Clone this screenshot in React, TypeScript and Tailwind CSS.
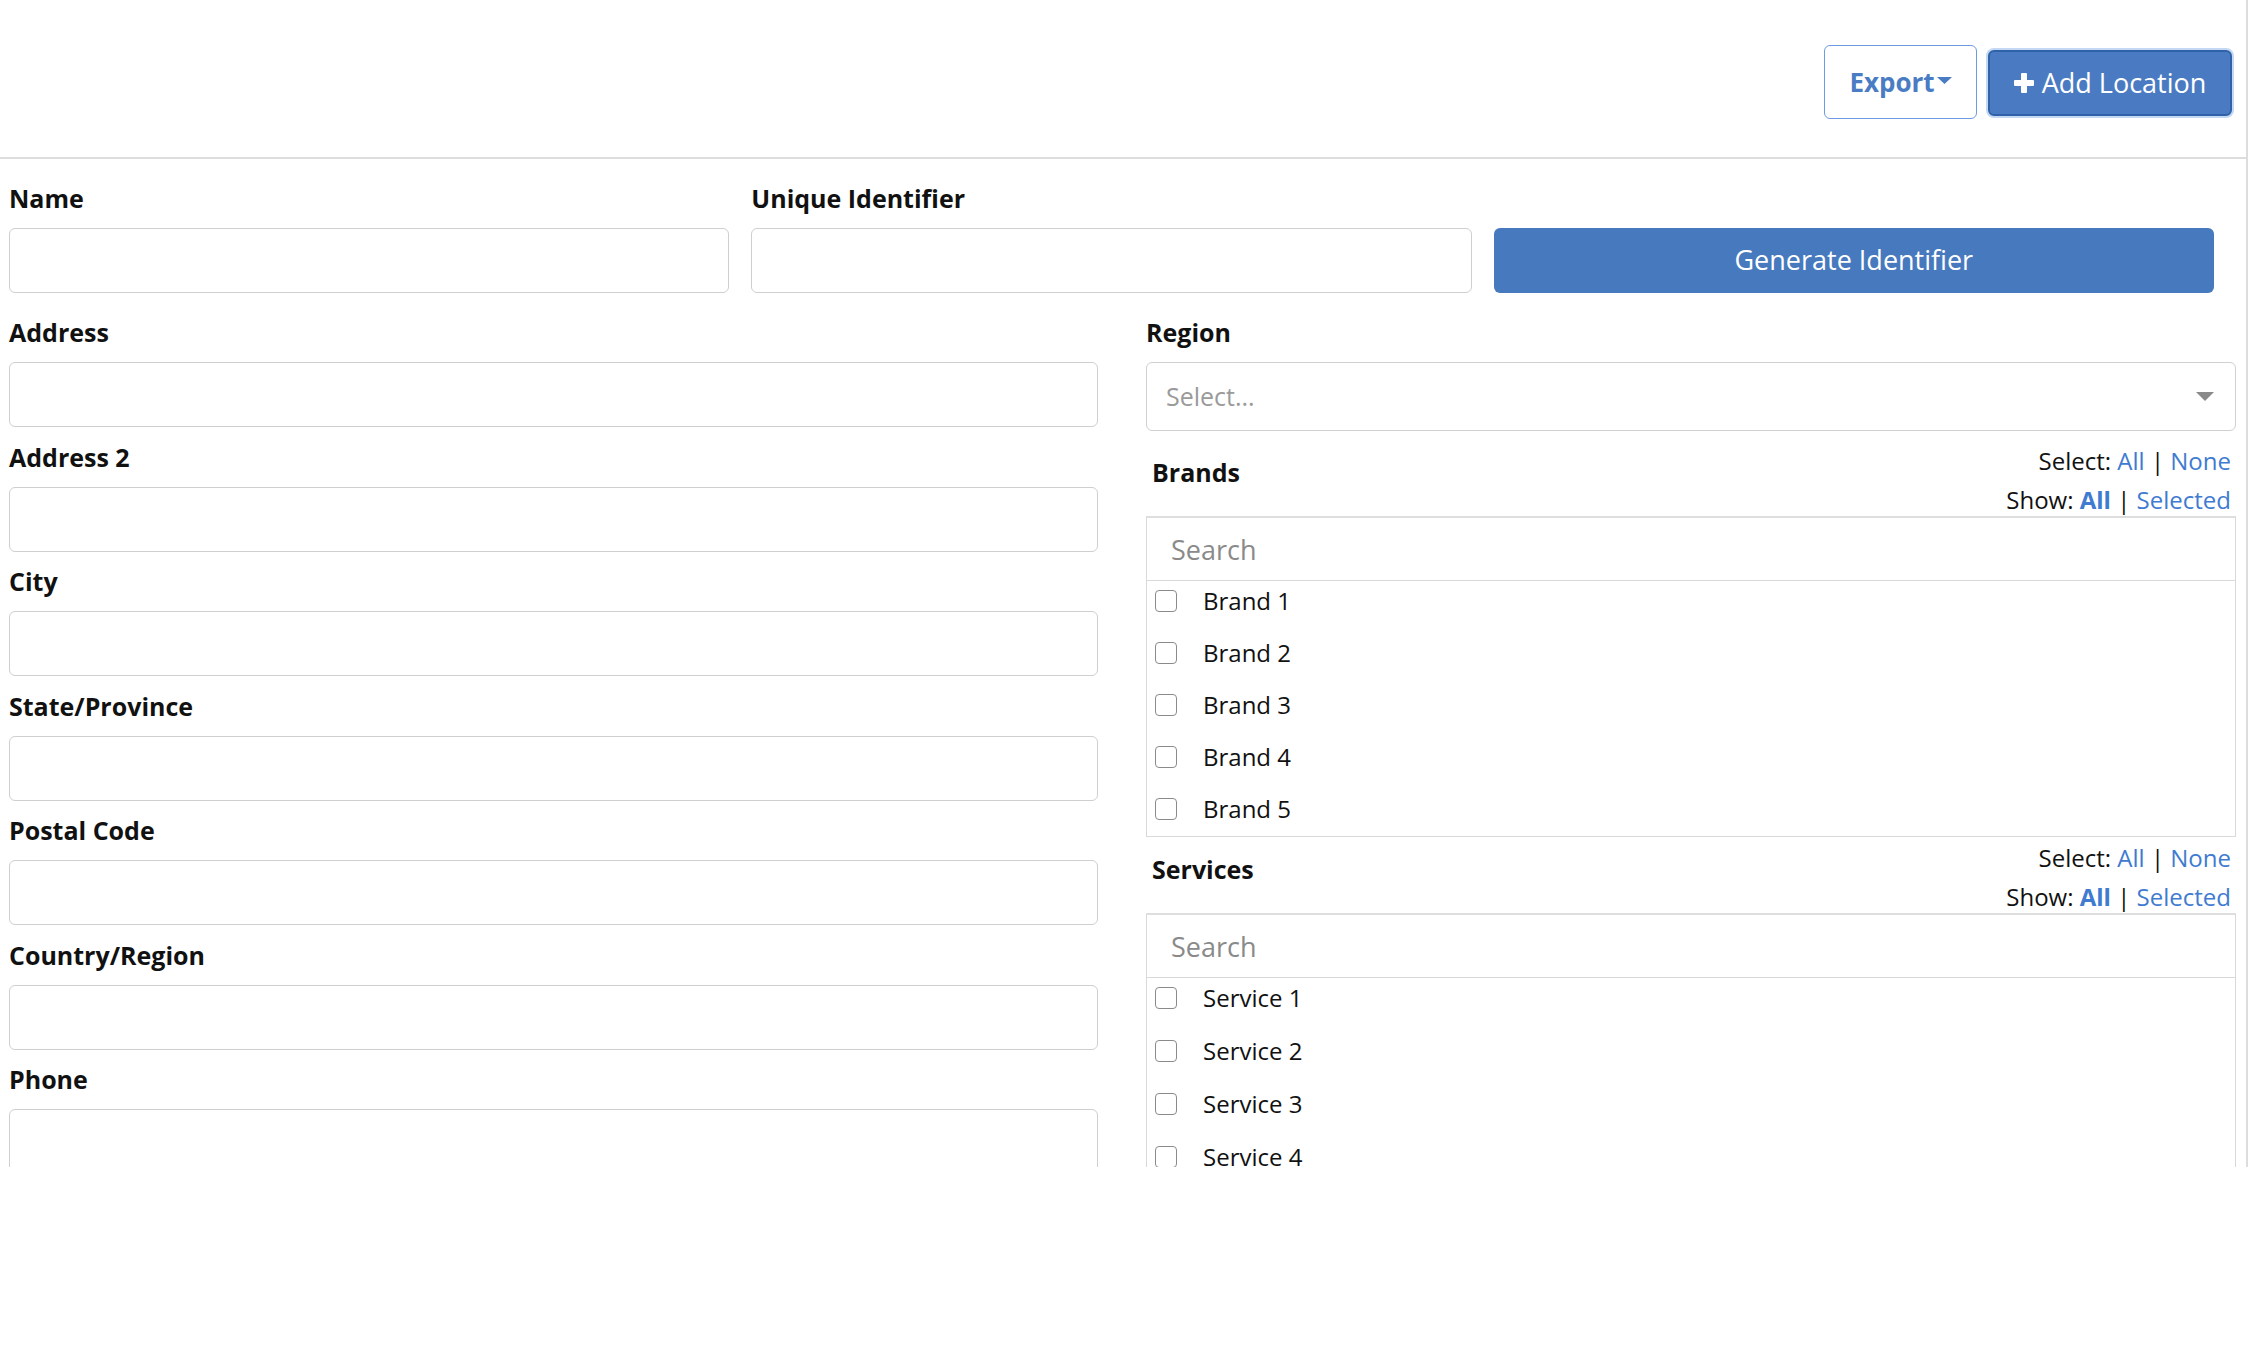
import React from 'react';

const leftFields = ['Address', 'Address 2', 'City', 'State/Province', 'Postal Code', 'Country/Region', 'Phone'];
const brands = ['Brand 1', 'Brand 2', 'Brand 3', 'Brand 4', 'Brand 5'];
const services = ['Service 1', 'Service 2', 'Service 3', 'Service 4'];

const Label: React.FC<{ children: React.ReactNode }> = ({ children }) => (
  <div className="text-[25px] font-bold leading-[34px] text-[#111] mb-[13px]">{children}</div>
);

const TextInput: React.FC = () => (
  <input
    type="text"
    className="block w-full h-[65px] rounded-[6px] border border-[#cfcfcf] bg-white px-4 text-[25px] outline-none"
  />
);

const CheckList: React.FC<{ title: string; items: string[]; gap: string }> = ({ title, items, gap }) => (
  <div>
    <div className="flex justify-between h-[73px]">
      <div className="pl-[6px] pt-[11px] text-[25px] font-bold leading-[36px] text-[#111]">{title}</div>
      <div className="pr-[5px] text-right text-[24px] text-[#111]">
        <div className="leading-[36px]">
          Select: <span className="text-[#3f7bd0]">All</span> | <span className="text-[#3f7bd0]">None</span>
        </div>
        <div className="leading-[36px] mt-[3px]">
          Show: <span className="font-bold text-[#3f7bd0]">All</span> | <span className="text-[#3f7bd0]">Selected</span>
        </div>
      </div>
    </div>
    <div className="border border-[#d9d9d9] border-t-2 border-t-[#dedede] bg-white">
      <input
        type="text"
        placeholder="Search"
        className="block w-full h-[63px] border-b border-[#d9d9d9] pl-[24px] text-[27px] text-[#222] placeholder:text-[#8a8a8a] outline-none"
      />
      <div className={`flex flex-col ${gap} pt-[2px] pb-[9px]`}>
        {items.map((item) => (
          <label key={item} className="flex items-center h-[36px] pl-[8px]">
            <span className="w-[22px] h-[22px] rounded-[4px] border-[1.5px] border-[#8a8a8a] bg-white" />
            <span className="ml-[26px] text-[24px] text-[#111]">{item}</span>
          </label>
        ))}
      </div>
    </div>
  </div>
);

export default function App() {
  return (
    <div className="w-[2248px] h-[1167px] overflow-hidden border-r-2 border-[#dddddd] bg-white font-['Open_Sans',sans-serif]">
      <div className="h-[159px] border-b-2 border-[#dddddd] flex justify-end items-start pt-[45px] pr-[14px] gap-[11px]">
        <button className="w-[153px] h-[74px] rounded-[6px] border border-[#6d9ae0] bg-white flex items-center justify-center">
          <span className="text-[26px] font-bold text-[#4a7cc4]">Export</span>
          <svg width="15" height="8" viewBox="0 0 15 8" className="ml-[2px] mt-[-2px]">
            <polygon points="0,0 15,0 7.5,7" fill="#4a7cc4" />
          </svg>
        </button>
        <button className="mt-[5px] w-[244px] h-[66px] rounded-[6px] border-2 border-[#2f62a8] bg-[#4a7bc2] ring-2 ring-[#c4d8f3] flex items-center justify-center">
          <svg width="20" height="20" viewBox="0 0 20 20">
            <rect x="7" y="0" width="6" height="20" rx="1" fill="#fff" />
            <rect x="0" y="7" width="20" height="6" rx="1" fill="#fff" />
          </svg>
          <span className="ml-[8px] text-[27px] text-white">Add Location</span>
        </button>
      </div>

      <div className="pl-[9px] pt-[22px]">
        <div className="flex gap-[22px] w-[2205px] mb-[22px]">
          <div className="flex-1">
            <Label>Name</Label>
            <TextInput />
          </div>
          <div className="flex-1">
            <Label>Unique Identifier</Label>
            <TextInput />
          </div>
          <div className="flex-1 flex flex-col justify-end">
            <button className="w-full h-[65px] rounded-[6px] bg-[#4679bd] text-white text-[27px]">
              Generate Identifier
            </button>
          </div>
        </div>

        <div className="flex gap-[48px]">
          <div className="w-[1089px]">
            {leftFields.map((f) => (
              <div key={f} className="mb-[12.5px]">
                <Label>{f}</Label>
                <TextInput />
              </div>
            ))}
          </div>

          <div className="w-[1090px]">
            <Label>Region</Label>
            <div className="h-[69px] rounded-[6px] border border-[#d0d0d0] bg-white flex items-center justify-between pl-[19px] pr-[21px]">
              <span className="text-[25px] text-[#9a9a9a]">Select...</span>
              <svg width="18" height="10" viewBox="0 0 18 10">
                <polygon points="0,0 18,0 9,9" fill="#8a8a8a" />
              </svg>
            </div>
            <div className="mt-[12px]">
              <CheckList title="Brands" items={brands} gap="gap-4" />
            </div>
            <div className="mt-[3px]">
              <CheckList title="Services" items={services} gap="gap-[17px]" />
            </div>
          </div>
        </div>
      </div>
    </div>
  );
}
